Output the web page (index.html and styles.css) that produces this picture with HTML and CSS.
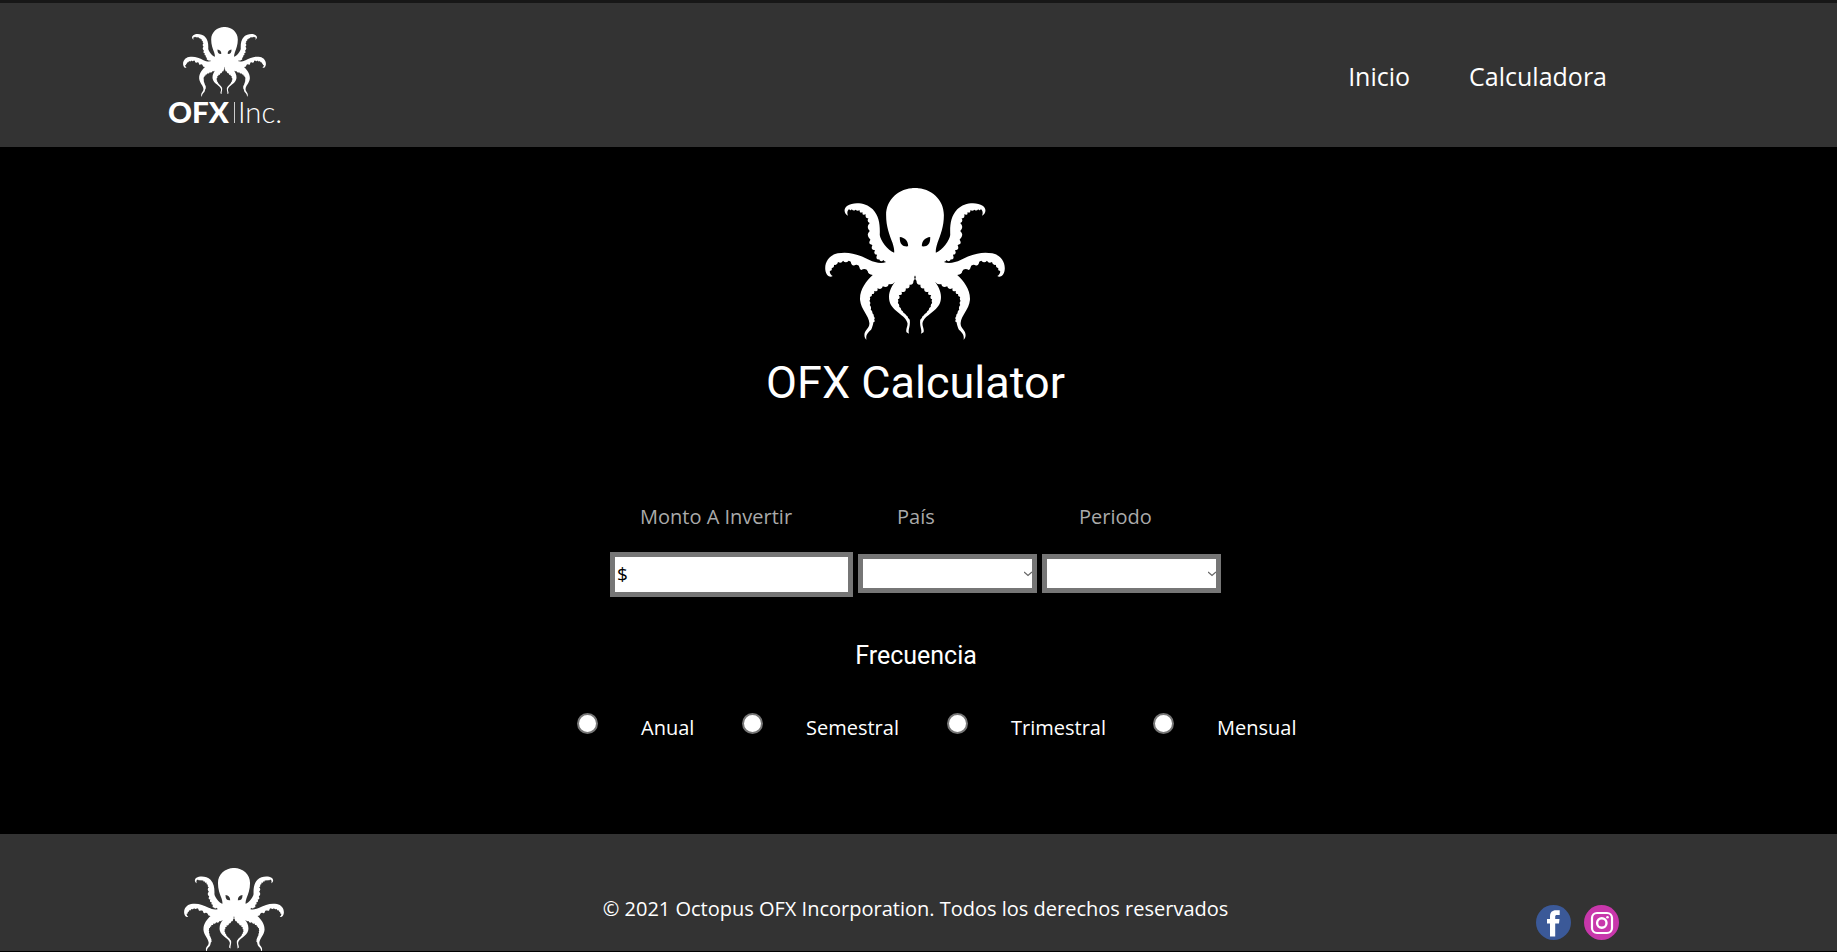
FILE: index.html
```html
<!DOCTYPE html>
<html lang="es">
<head>
<meta charset="utf-8">
<title>OFX Calculator</title>
<link rel="stylesheet" href="styles.css">
</head>
<body>
<svg class="defs" width="0" height="0">
  <defs>
    <path id="half" fill-rule="evenodd" d="M325 39.5L316 39C268 39 230 74 230 120C230 155 240 180 249 203C253 215 255 225 254 233C235 227 212 195 211 180C212 150 210 125 190 103C170 82 132 80 114 92C102 100 103 115 116 122C111 112 116 105 119 102Q123 109 127 103Q133 110 138 104Q146 110 150 105Q151 117 159 111Q158 123 169 118Q166 132 177 129Q171 141 181 144Q169 156 181 168Q168 180 183 194Q174 208 189 210Q182 226 197 226Q190 238 203 239Q197 255 209 253Q214 263 222 255Q224 260 230 261C215 267 195 262 180 255C150 240 120 228 85 235C60 240 45 262 48 285C50 302 62 309 70 303C63 299 60 291 62 287Q69 289 67 279Q75 279 74 269Q84 272 86 261Q96 267 101 257Q109 266 118 257Q126 258 125 265Q129 275 137 270Q149 267 150 277Q152 289 160 283Q171 280 175 289Q176 299 190 300C170 318 150 345 152 375C155 405 178 420 180 445C180 462 165 465 165 480C165 488 168 492 171 494C168 478 178 472 186 463C190 453 191 448 192 442Q199 440 194 434Q198 429 193 424Q194 418 189 415Q190 408 184 404Q187 396 181 390Q185 383 180 378Q184 370 181 366Q190 364 187 357Q197 359 194 348Q207 352 204 340Q218 346 220 334Q235 340 238 327Q247 331 257 320C245 335 235 355 240 378C247 410 290 420 294 445C295 455 288 462 291 472L299 476C294 465 303 455 301 438Q302 434 296 429Q296 424 290 421Q289 416 282 413Q281 408 275 405Q276 399 269 395Q271 389 265 384Q268 378 265 373Q274 371 268 360Q281 362 276 350Q290 354 289 340Q302 342 300 329Q312 331 312 317Q318 313 314 307L317 300L325 285ZM271 186C286 188 296 197 296 214C279 216 270 207 271 186Z"/>
    <g id="octopus">
      <use href="#half"/>
      <use href="#half" transform="matrix(-1 0 0 1 633 0)"/>
    </g>
  </defs>
</svg>

<header class="bar header">
  <svg class="brand" viewBox="0 0 120 105" fill="#fff">
    <svg x="16" y="4" width="83" height="70" viewBox="47 39 539 456" preserveAspectRatio="none"><use href="#octopus"/></svg>
    <text class="brand-bold" x="1" y="100" textLength="61" lengthAdjust="spacingAndGlyphs">OFX</text>
    <rect x="67" y="79" width="1" height="21" opacity=".75"/>
    <text class="brand-light" x="71" y="100" textLength="44" lengthAdjust="spacingAndGlyphs">Inc.</text>
  </svg>
  <nav class="nav">
    <a>Inicio</a>
    <a>Calculadora</a>
  </nav>
</header>

<main class="main">
  <svg class="hero" viewBox="47 39 539 456" preserveAspectRatio="none" fill="#fff"><use href="#octopus"/></svg>
  <h1 class="title">OFX Calculator</h1>
  <form class="form">
    <div class="labels">
      <label class="label-amount">Monto A Invertir</label>
      <label class="label-country">País</label>
      <label>Periodo</label>
    </div>
    <div class="fields">
      <div class="amount">$</div>
      <div class="select"><svg width="8" height="6" viewBox="0 0 8 6"><path d="M0 1L4 4.5L8 1"/></svg></div>
      <div class="select"><svg width="8" height="6" viewBox="0 0 8 6"><path d="M0 1L4 4.5L8 1"/></svg></div>
    </div>
    <h2 class="subtitle">Frecuencia</h2>
    <div class="radios">
      <label class="option option-a"><i class="radio"></i>Anual</label>
      <label class="option option-b"><i class="radio"></i>Semestral</label>
      <label class="option option-c"><i class="radio"></i>Trimestral</label>
      <label class="option"><i class="radio"></i>Mensual</label>
    </div>
  </form>
</main>

<footer class="bar footer">
  <svg class="foot-logo" viewBox="47 39 539 456" preserveAspectRatio="none" fill="#fff"><use href="#octopus"/></svg>
  <p class="copy">© 2021 Octopus OFX Incorporation. Todos los derechos reservados</p>
  <div class="social">
    <svg width="35" height="35" viewBox="0 0 35 35"><circle cx="17.5" cy="17.5" r="17.5" fill="#3b5998"/><path fill="#fff" d="M14 31.5V18.5H11V14H14V11.5C14 7.5 16 5.3 20 5.3H23.7V10H21C19.6 10 19.2 10.6 19.2 12V14H23.5L23 18.5H19.2V31.5Z"/></svg>
    <svg width="35" height="35" viewBox="0 0 35 35" fill="none" stroke="#fff"><circle cx="17.5" cy="17.5" r="17.5" fill="#c837ab" stroke="none"/><rect x="8" y="8" width="20" height="20" rx="5" stroke-width="2.2"/><circle cx="17.8" cy="18" r="4.7" stroke-width="2.4"/><circle cx="23.5" cy="12.2" r="1.3" fill="#fff" stroke="none"/></svg>
  </div>
</footer>
</body>
</html>
```
FILE: styles.css
```css
* { box-sizing: border-box; }
body {
  margin: 0;
  height: 952px;
  overflow: hidden;
  background: #000;
  color: #fff;
  font-family: "Open Sans", "Noto Sans", sans-serif;
  font-size: 20px;
  line-height: 28px;
}
.defs { display: block; }
.bar { display: flex; background: #333; }
.header {
  height: 147px;
  border-top: 3px solid #171717;
  padding: 20px 230px 0 167px;
  justify-content: space-between;
}
.brand { width: 120px; height: 105px; }
.brand-bold { font: 900 29px Lato, sans-serif; }
.brand-light { font: 300 29px Lato, sans-serif; }
.nav { display: flex; gap: 59px; padding-top: 35px; font-size: 25px; line-height: 36px; }
.main {
  height: 687px;
  padding-top: 41px;
  display: flex;
  flex-direction: column;
  align-items: center;
}
.hero { width: 180px; height: 152px; margin-right: 7px; }
.title {
  margin: 16px 6px 0 0;
  font: 400 45px/54px Roboto, sans-serif;
}
.form { width: 720px; margin-left: -5px; }
.labels { display: flex; padding: 93px 0 0 84px; color: #aaa; }
.label-amount { width: 257px; }
.label-country { width: 182px; }
.fields { display: flex; gap: 5px; align-items: center; padding: 21px 0 0 54px; }
.amount {
  width: 243px;
  height: 45px;
  border: 5px solid #767676;
  background: #fff;
  color: #000;
  padding: 3px 2px;
  font-size: 19px;
}
.select {
  width: 179px;
  height: 39px;
  margin-bottom: 2px;
  border: 5px solid #767676;
  background: #fff;
  display: flex;
  align-items: center;
  justify-content: flex-end;
}
.select svg { fill: none; stroke: #666; stroke-width: 1.3; }
.subtitle { margin: 43px 0 0; text-align: center; font: 400 25px/32px Roboto, sans-serif; }
.radios { display: flex; padding: 42px 0 0 21px; }
.option { display: flex; flex: none; gap: 43px; }
.option-a { width: 165px; }
.option-b { width: 205px; }
.option-c { width: 206px; }
.radio {
  width: 21px;
  height: 21px;
  margin-top: -1px;
  border: 2px solid #767676;
  border-radius: 50%;
  background: #fff;
}
.footer {
  height: 117px;
  overflow: hidden;
  padding: 34px 218px 0 184px;
  justify-content: space-between;
}
.foot-logo { width: 100px; height: 84px; }
.copy { margin: 27px 0 0; padding-left: 11px; }
.social { display: flex; gap: 13px; padding-top: 37px; }
```
